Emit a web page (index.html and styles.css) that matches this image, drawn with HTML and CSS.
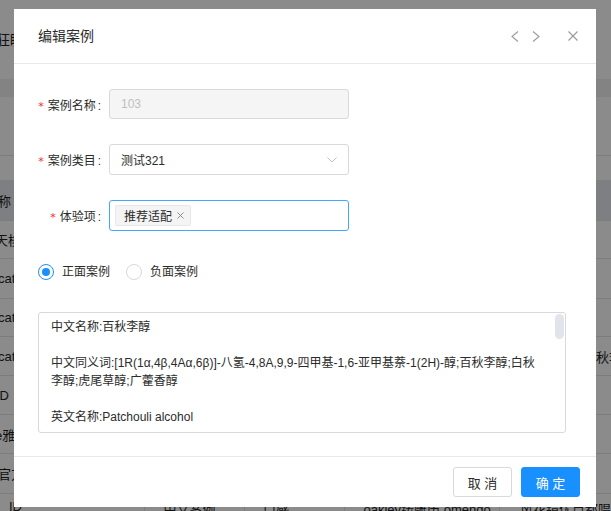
FILE: index.html
```html
<!DOCTYPE html>
<html lang="zh">
<head>
<meta charset="utf-8">
<title>编辑案例</title>
<link rel="stylesheet" href="styles.css">
</head>
<body>
<div class="page">
  <div class="p-top"><span class="cut cut-a">狂眠</span></div>
  <div class="p-band"></div>
  <div class="p-row h59"></div>
  <div class="p-row h24 noline"></div>
  <div class="p-row h41 sel"><span class="cut cut-b">称</span></div>
  <div class="p-row h38"><span class="cut cut-c">天梭</span></div>
  <div class="p-row h40"><span class="cut cut-d">cati</span></div>
  <div class="p-row h38"><span class="cut cut-d">cati</span></div>
  <div class="p-row h39"><span class="cut cut-d">cati</span><span class="rcut">百秋李</span></div>
  <div class="p-row h39"><span class="cut cut-e">ID</span></div>
  <div class="p-row h39"><span class="cut cut-f">e雅</span></div>
  <div class="p-row h40"><span class="cut cut-g">官方</span></div>
  <div class="p-last">
    <span class="cell c1">ID</span>
    <span class="cell c2">中文案例</span>
    <span class="cell c3">口感</span>
    <span class="cell c4">oakley铸雕历 omendo</span>
    <span class="cell c5">风花镜优点都唱</span>
  </div>
</div>
<div class="mask"></div>

<div class="modal">
  <div class="modal-header">
    <div class="modal-title">编辑案例</div>
    <div class="header-tools">
      <svg class="ico-chev" width="8" height="11" viewBox="0 0 8 11"><polyline points="7,0.5 1,5.5 7,10.5" fill="none" stroke="#9a9a9a" stroke-width="1.1"/></svg>
      <svg class="ico-chev next" width="8" height="11" viewBox="0 0 8 11"><polyline points="1,0.5 7,5.5 1,10.5" fill="none" stroke="#9a9a9a" stroke-width="1.1"/></svg>
      <svg class="ico-close" width="10" height="10" viewBox="0 0 10 10"><path d="M0.5 0.5L9.5 9.5M9.5 0.5L0.5 9.5" fill="none" stroke="#9a9a9a" stroke-width="1.1"/></svg>
    </div>
  </div>

  <div class="modal-body">
    <div class="form-row r1">
      <label class="form-label"><span class="req">*</span>案例名称<span class="colon">:</span></label>
      <div class="input disabled">103</div>
    </div>
    <div class="form-row r2">
      <label class="form-label"><span class="req">*</span>案例类目<span class="colon">:</span></label>
      <div class="input select">
        <span>测试321</span>
        <svg class="ico-down" width="10" height="6" viewBox="0 0 10 6"><polyline points="0.5,0.5 5,5 9.5,0.5" fill="none" stroke="#bfbfbf" stroke-width="1"/></svg>
      </div>
    </div>
    <div class="form-row r3">
      <label class="form-label"><span class="req">*</span>体验项<span class="colon">:</span></label>
      <div class="input tags">
        <span class="tag">推荐适配<svg class="tag-x" width="7" height="7" viewBox="0 0 7 7"><path d="M0.5 0.5L6.5 6.5M6.5 0.5L0.5 6.5" fill="none" stroke="#8c8c8c" stroke-width="1"/></svg></span>
      </div>
    </div>

    <div class="radio-group">
      <label class="radio"><span class="radio-dot on"></span><span class="radio-text">正面案例</span></label>
      <label class="radio"><span class="radio-dot"></span><span class="radio-text">负面案例</span></label>
    </div>

    <div class="text-box">
      <div class="line">中文名称:百秋李醇</div>
      <div class="line">&nbsp;</div>
      <div class="line">中文同义词:[1R(1α,4β,4Aα,6β)]-八氢-4,8A,9,9-四甲基-1,6-亚甲基萘-1(2H)-醇;百秋李醇;白秋</div>
      <div class="line">李醇;虎尾草醇;广藿香醇</div>
      <div class="line">&nbsp;</div>
      <div class="line">英文名称:Patchouli alcohol</div>
      <div class="thumb"></div>
    </div>
  </div>

  <div class="modal-footer">
    <button class="btn">取 消</button>
    <button class="btn primary">确 定</button>
  </div>
</div>
</body>
</html>
```

FILE: styles.css
```css
* { box-sizing: border-box; }
html, body { margin: 0; height: 100%; overflow: hidden; }
body {
  font-family: "Liberation Sans", "Noto Sans CJK SC", sans-serif;
  font-size: 12px;
  color: #2b2b2b;
  background: #fff;
}

/* background page */
.page { display: flex; flex-direction: column; width: 611px; }
.p-top { height: 79px; display: flex; align-items: center; font-size: 14px; color: #222; padding-bottom: 2px; }
.p-band { height: 18px; background: #f0f0f0; flex: none; }
.p-row {
  flex: none;
  display: flex;
  align-items: center;
  justify-content: space-between;
  border-bottom: 1px solid #e6e6e6;
  font-size: 13px;
  color: #222;
  overflow: hidden;
}
.p-row.noline { border-bottom: 0; }
.p-row.sel { background: #e6eaf0; }
.h24 { height: 24px; }
.h38 { height: 38px; }
.h39 { height: 39px; }
.h40 { height: 40px; }
.h41 { height: 41px; }
.h59 { height: 59px; }
.cut { white-space: nowrap; }
.cut-a { margin-left: -4px; }
.cut-b { margin-left: -2px; }
.cut-c { margin-left: -5px; }
.cut-d { margin-left: -2px; }
.cut-e { margin-left: -4px; }
.cut-f { margin-left: -5px; }
.cut-g { margin-left: -2px; }
.rcut { margin-right: -11px; white-space: nowrap; }
.p-last { display: flex; height: 30px; font-size: 13px; color: #222; padding-top: 5px; }
.cell { border-left: 1px solid #e6e6e6; white-space: nowrap; padding-left: 18px; }
.c1 { border-left: 0; width: 147px; padding-left: 9px; }
.c2 { width: 101px; }
.c3 { width: 102px; }
.c4 { width: 157px; }
.c5 { flex: 1; padding-left: 20px; }

.mask { position: fixed; inset: 0; background: rgba(0, 0, 0, 0.455); }

/* modal */
.modal {
  position: absolute;
  left: 14px;
  top: 9px;
  width: 582px;
  height: 498px;
  background: #fff;
  display: flex;
  flex-direction: column;
}
.modal-header {
  height: 55px;
  flex: none;
  border-bottom: 1px solid #e8e8e8;
  display: flex;
  align-items: center;
  justify-content: space-between;
  padding: 0 18px 0 24px;
}
.modal-title { font-size: 14px; color: #2b2b2b; line-height: 20px; }
.header-tools { display: flex; align-items: center; }
.ico-chev, .ico-close { display: block; }
.ico-chev.next { margin-left: 13px; }
.ico-close { margin-left: 28px; }

.modal-body { flex: 1; padding: 25px 24px 0 24px; }
.form-row { display: flex; align-items: center; }
.r1 { height: 30px; margin-bottom: 25px; }
.r2 { height: 31px; margin-bottom: 25px; }
.r3 { height: 31px; }
.form-label {
  width: 71px;
  flex: none;
  text-align: right;
  font-size: 12px;
  color: #2b2b2b;
  white-space: nowrap;
}
.req { color: #f5222d; margin-right: 4px; font-family: "DejaVu Sans", sans-serif; font-size: 11px; }
.colon { margin: 0 8px 0 2px; }
.input {
  width: 240px;
  height: 100%;
  border: 1px solid #d9d9d9;
  border-radius: 3px;
  padding: 0 11px;
  display: flex;
  align-items: center;
  font-size: 12px;
  color: #2b2b2b;
  background: #fff;
}
.input.disabled { background: #f5f5f5; color: #bfbfbf; }
.input.select { justify-content: space-between; padding-right: 11px; }
.ico-down { display: block; }
.input.tags { border-color: #40a9ff; padding: 0 5px; }
.tag {
  display: inline-flex;
  align-items: center;
  height: 21px;
  padding: 0 6px 0 8px;
  background: #f4f4f4;
  border: 1px solid #e8e8e8;
  border-radius: 2px;
  color: #2b2b2b;
  font-size: 12px;
}
.tag-x { display: block; margin-left: 5px; }

.radio-group { display: flex; align-items: center; margin-top: 32px; height: 17px; }
.radio { display: flex; align-items: center; margin-right: 8px; }
.radio-dot {
  width: 16px;
  height: 16px;
  border: 1px solid #d9d9d9;
  border-radius: 50%;
  position: relative;
  background: #fff;
}
.radio-dot.on { border-color: #1890ff; }
.radio-dot.on::after {
  content: "";
  position: absolute;
  left: 3px;
  top: 3px;
  width: 8px;
  height: 8px;
  border-radius: 50%;
  background: #1890ff;
}
.radio-text { padding: 0 8px; font-size: 12px; color: #2b2b2b; line-height: 16px; }

.text-box {
  position: relative;
  margin-top: 32px;
  width: 528px;
  height: 121px;
  border: 1px solid #d9d9d9;
  border-radius: 3px;
  padding: 5px 12px;
  overflow: hidden;
}
.line { line-height: 18px; font-size: 12px; color: #2b2b2b; white-space: nowrap; }
.thumb {
  position: absolute;
  top: 1px;
  right: 1px;
  width: 9px;
  height: 25px;
  border-radius: 5px;
  background: #e1e4ea;
}

.modal-footer {
  flex: none;
  height: 51px;
  border-top: 1px solid #e8e8e8;
  padding: 10px 16px;
  display: flex;
  justify-content: flex-end;
  gap: 9px;
}
.btn {
  width: 59px;
  height: 30px;
  border: 1px solid #d9d9d9;
  border-radius: 3px;
  background: #fff;
  color: #2b2b2b;
  font-family: "Liberation Sans", "Noto Sans CJK SC", sans-serif;
  font-size: 13px;
  padding: 0;
}
.btn.primary { background: #1890ff; border-color: #1890ff; color: #fff; }
```
